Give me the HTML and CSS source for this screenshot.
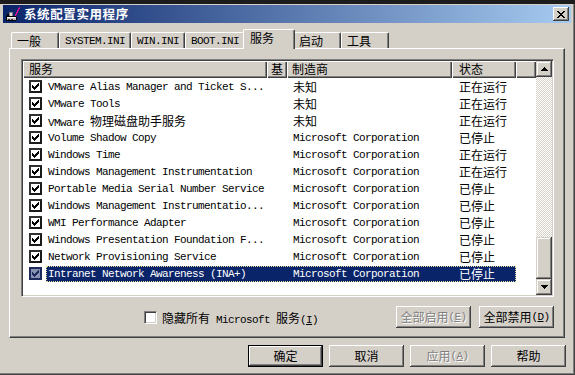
FILE: index.html
```html
<!DOCTYPE html>
<html lang="zh-CN">
<head>
<meta charset="utf-8">
<title>系统配置实用程序</title>
<link rel="stylesheet" href="styles.css">
</head>
<body>
<div class="topstrip"></div>
<div class="window">
  <div class="titlebar">
    <svg class="appicon" viewBox="0 0 16 16" shape-rendering="crispEdges">
      <path d="M1 10h10v1h1v3h-1v1H1z" fill="#000"/>
      <path d="M2 11h9v3H2z" fill="#c0c0c0"/>
      <path d="M2 11h9v1H2z" fill="#fff"/>
      <path d="M3 13h2v1H3zM6 13h2v1H6z" fill="#404040"/>
      <path d="M4 6h4v4H4z" fill="#808080"/>
      <path d="M5 7h2v3H5z" fill="#e0e0e0"/>
      <path d="M2 8h2v2H2z" fill="#000"/>
      <path d="M14 1h1v2h-1v2h-1v2h-1v2h-1v1h-1V8h1V6h1V4h1V2h1z" fill="#e0109a"/>
    </svg>
    <span class="title">系统配置实用程序</span>
    <div class="close">
      <svg width="8" height="7" viewBox="0 0 8 7" shape-rendering="crispEdges"><path d="M0 0h2v1H0zM6 0h2v1H6zM1 1h2v1H1zM5 1h2v1H5zM2 2h4v1H2zM3 3h2v1H3zM2 4h4v1H2zM1 5h2v1H1zM5 5h2v1H5zM0 6h2v1H0zM6 6h2v1H6z" fill="#000"/></svg>
    </div>
  </div>

  <div class="tabs">
    <div class="tab">一般</div>
    <div class="tab m">SYSTEM.INI</div>
    <div class="tab m">WIN.INI</div>
    <div class="tab m">BOOT.INI</div>
    <div class="tab active">服务</div>
    <div class="tab">启动</div>
    <div class="tab">工具</div>
  </div>

  <div class="panel">
    <div class="listbox">
      <div class="list">
        <div class="header">
          <div class="hcell h-svc">服务</div>
          <div class="hcell h-ji">基</div>
          <div class="hcell h-mfr">制造商</div>
          <div class="hcell h-st">状态</div>
          <div class="hcell"></div>
        </div>

        <div class="row"><div class="cbcell"><span class="cb"></span></div><div class="sel"><span class="name m">VMware Alias Manager and Ticket S...</span><span></span><span class="mfr">未知</span><span class="st">正在运行</span></div></div>
        <div class="row"><div class="cbcell"><span class="cb"></span></div><div class="sel"><span class="name m">VMware Tools</span><span></span><span class="mfr">未知</span><span class="st">正在运行</span></div></div>
        <div class="row"><div class="cbcell"><span class="cb"></span></div><div class="sel"><span class="name"><span class="m">VMware </span>物理磁盘助手服务</span><span></span><span class="mfr">未知</span><span class="st">正在运行</span></div></div>
        <div class="row"><div class="cbcell"><span class="cb"></span></div><div class="sel"><span class="name m">Volume Shadow Copy</span><span></span><span class="mfr m">Microsoft Corporation</span><span class="st">已停止</span></div></div>
        <div class="row"><div class="cbcell"><span class="cb"></span></div><div class="sel"><span class="name m">Windows Time</span><span></span><span class="mfr m">Microsoft Corporation</span><span class="st">正在运行</span></div></div>
        <div class="row"><div class="cbcell"><span class="cb"></span></div><div class="sel"><span class="name m">Windows Management Instrumentation</span><span></span><span class="mfr m">Microsoft Corporation</span><span class="st">正在运行</span></div></div>
        <div class="row"><div class="cbcell"><span class="cb"></span></div><div class="sel"><span class="name m">Portable Media Serial Number Service</span><span></span><span class="mfr m">Microsoft Corporation</span><span class="st">已停止</span></div></div>
        <div class="row"><div class="cbcell"><span class="cb"></span></div><div class="sel"><span class="name m">Windows Management Instrumentatio...</span><span></span><span class="mfr m">Microsoft Corporation</span><span class="st">已停止</span></div></div>
        <div class="row"><div class="cbcell"><span class="cb"></span></div><div class="sel"><span class="name m">WMI Performance Adapter</span><span></span><span class="mfr m">Microsoft Corporation</span><span class="st">已停止</span></div></div>
        <div class="row"><div class="cbcell"><span class="cb"></span></div><div class="sel"><span class="name m">Windows Presentation Foundation F...</span><span></span><span class="mfr m">Microsoft Corporation</span><span class="st">已停止</span></div></div>
        <div class="row"><div class="cbcell"><span class="cb"></span></div><div class="sel"><span class="name m">Network Provisioning Service</span><span></span><span class="mfr m">Microsoft Corporation</span><span class="st">已停止</span></div></div>
        <div class="row"><div class="cbcell"><span class="cb cb-sel"></span></div><div class="sel selected"><span class="name m">Intranet Network Awareness (INA+)</span><span></span><span class="mfr m">Microsoft Corporation</span><span class="st">已停止</span></div></div>
      </div>
      <div class="scrollbar">
        <div class="sbtn">
          <svg width="7" height="4" viewBox="0 0 7 4" shape-rendering="crispEdges"><path d="M3 0h1v1H3zM2 1h3v1H2zM1 2h5v1H1zM0 3h7v1H0z" fill="#000"/></svg>
        </div>
        <div class="track"></div>
        <div class="thumb"></div>
        <div class="sbtn">
          <svg width="7" height="4" viewBox="0 0 7 4" shape-rendering="crispEdges"><path d="M0 0h7v1H0zM1 1h5v1H1zM2 2h3v1H2zM3 3h1v1H3z" fill="#000"/></svg>
        </div>
      </div>
    </div>

    <div class="actions">
      <div class="hide"><span class="cb2"></span><span class="hide-label">隐藏所有<span class="m"> Microsoft </span>服务<span class="m">(<u>I</u>)</span></span></div>
      <div class="btn disabled first">全部启用<span class="m">(<u>E</u>)</span></div>
      <div class="btn">全部禁用<span class="m">(<u>D</u>)</span></div>
    </div>
  </div>

  <div class="footer">
    <div class="btn default">确定</div>
    <div class="btn">取消</div>
    <div class="btn disabled">应用<span class="m">(<u>A</u>)</span></div>
    <div class="btn">帮助</div>
  </div>
</div>
</body>
</html>
```

FILE: styles.css
```css
* { box-sizing: border-box; }
html, body { margin: 0; padding: 0; }
body {
  width: 575px;
  height: 375px;
  overflow: hidden;
  background: #d4d0c8;
  font-family: "Noto Sans CJK SC", "Noto Sans", sans-serif;
  font-size: 12px;
  color: #000;
}
.m {
  font-family: "Liberation Mono", "Noto Sans CJK SC", monospace;
  font-size: 11px;
  letter-spacing: -0.6px;
}
.topstrip { height: 4px; background: #1c1c1c; }

.window {
  height: 371px;
  padding: 1px 4px 0 3px;
  background: #d4d0c8;
  box-shadow: inset -1px -1px #404040, inset -2px -2px #808080;
  display: flex;
  flex-direction: column;
}

/* title bar */
.titlebar {
  height: 18px;
  flex: none;
  display: flex;
  align-items: center;
  padding-left: 2px;
  background: linear-gradient(to right, #0a246a, #a6caf0);
}
.appicon { width: 16px; height: 16px; flex: none; }
.title {
  margin-left: 3px;
  color: #fff;
  font-weight: bold;
  font-size: 12.5px;
  letter-spacing: 0.6px;
  line-height: 18px;
}
.close {
  margin-left: auto;
  margin-right: 2px;
  width: 16px;
  height: 14px;
  background: #d4d0c8;
  box-shadow: inset -1px -1px #404040, inset 1px 1px #fff, inset -2px -2px #808080;
  display: flex;
  align-items: center;
  justify-content: center;
}

/* tabs */
.tabs {
  display: flex;
  align-items: flex-end;
  height: 19px;
  margin-top: 6px;
  padding-left: 8px;
  flex: none;
}
.tab {
  height: 16px;
  min-width: 48px;
  padding: 0 5px;
  line-height: 16px;
  background: #d4d0c8;
  border-top: 1px solid #fff;
  border-left: 1px solid #fff;
  border-right: 1px solid #404040;
  box-shadow: inset -1px 0 #808080;
  border-radius: 2px 2px 0 0;
  white-space: nowrap;
}
.tab.m { line-height: 17px; }
.tab.active {
  height: 20px;
  min-width: 52px;
  margin: 0 -2px -1px;
  padding: 0 6px;
  line-height: 16px;
  position: relative;
  z-index: 1;
}

/* panel */
.panel {
  width: 556px;
  height: 290px;
  margin-left: 6px;
  flex: none;
  background: #d4d0c8;
  border-top: 1px solid #fff;
  border-left: 1px solid #fff;
  border-right: 1px solid #404040;
  border-bottom: 1px solid #404040;
  box-shadow: inset -1px -1px #808080;
  padding: 10px 0 0 11px;
}

.listbox {
  width: 533px;
  height: 238px;
  display: flex;
  border: 1px solid;
  border-color: #808080 #fff #fff #808080;
  box-shadow: inset 1px 1px #404040, inset -1px -1px #d4d0c8;
  padding: 1px;
}
.list {
  width: 513px;
  height: 100%;
  background: #fff;
}
.header {
  display: grid;
  grid-template-columns: 244px 20px 165px 64px 20px;
  height: 17px;
}
.hcell {
  background: #d4d0c8;
  box-shadow: inset 1px 1px #fff, inset -1px -1px #404040, inset -2px -2px #808080;
  padding-left: 6px;
  line-height: 16px;
  white-space: nowrap;
  overflow: hidden;
}
.h-ji { padding-left: 4px; }
.h-mfr { padding-left: 5px; }
.h-st { padding-left: 7px; }

.row {
  display: flex;
  align-items: center;
  height: 17px;
}
.cbcell {
  width: 23px;
  flex: none;
  padding-left: 6px;
  display: flex;
  align-items: center;
}
.cb {
  width: 13px;
  height: 13px;
  flex: none;
  border: 2px solid #1a1a1a;
  border-top-color: #303030;
  border-left-color: #303030;
  background: #fff url("data:image/svg+xml,%3Csvg xmlns='http://www.w3.org/2000/svg' width='9' height='9' viewBox='0 0 9 9' shape-rendering='crispEdges'%3E%3Cpath d='M7 1h1v1H7zM6 2h2v1H6zM1 3h1v1H1zM5 3h3v1H5zM1 4h2v1H1zM4 4h3v1H4zM1 5h5v1H1zM2 6h3v1H2zM3 7h1v1H3z' fill='%23000'/%3E%3C/svg%3E") no-repeat 0 0;
}
.cb-sel {
  border-color: #1c2a5c;
  background: #8a92b4 url("data:image/svg+xml,%3Csvg xmlns='http://www.w3.org/2000/svg' width='9' height='9' viewBox='0 0 9 9' shape-rendering='crispEdges'%3E%3Cpath d='M7 1h1v1H7zM6 2h2v1H6zM1 3h1v1H1zM5 3h3v1H5zM1 4h2v1H1zM4 4h3v1H4zM1 5h5v1H1zM2 6h3v1H2zM3 7h1v1H3z' fill='%231c2a5c'/%3E%3C/svg%3E") no-repeat 0 0;
}
.sel {
  width: 470px;
  height: 16px;
  display: grid;
  grid-template-columns: 221px 20px 165px 64px;
  line-height: 16px;
  white-space: nowrap;
}
.sel > span { overflow: hidden; }
.name { padding-left: 2px; }
.mfr { padding-left: 6px; }
.st { padding-left: 7px; }
.sel.selected {
  background: #0a246a;
  color: #fff;
  outline: 1px dotted #e8dc9a;
  outline-offset: -1px;
}

/* scrollbar */
.scrollbar {
  width: 16px;
  height: 100%;
  display: flex;
  flex-direction: column;
}
.sbtn, .thumb {
  height: 16px;
  flex: none;
  background: #d4d0c8;
  box-shadow: inset -1px -1px #404040, inset 1px 1px #d4d0c8, inset -2px -2px #808080, inset 2px 2px #fff;
  display: flex;
  align-items: center;
  justify-content: center;
}
.thumb { height: 42px; }
.track {
  flex: 1;
  background: repeating-conic-gradient(#fff 0 25%, #d4d0c8 0 50%) 0 0 / 2px 2px;
}

/* actions under list */
.actions {
  width: 533px;
  height: 22px;
  margin-top: 9px;
  display: flex;
  align-items: center;
}
.hide {
  display: flex;
  align-items: center;
  margin-left: 123px;
}
.cb2 {
  width: 13px;
  height: 13px;
  flex: none;
  background: #fff;
  border: 1px solid;
  border-color: #808080 #fff #fff #808080;
  box-shadow: inset 1px 1px #404040, inset -1px -1px #d4d0c8;
}
.hide-label { margin-left: 5px; white-space: pre; }
.actions .btn { margin-left: 8px; }
.actions .btn.first { margin-left: auto; }

/* buttons */
.btn {
  width: 75px;
  height: 22px;
  flex: none;
  background: #d4d0c8;
  box-shadow: inset -1px -1px #404040, inset 1px 1px #fff, inset -2px -2px #808080;
  display: flex;
  align-items: center;
  justify-content: center;
  white-space: nowrap;
  line-height: 16px;
}
.btn.default {
  border: 1px solid #000;
}
.btn.disabled {
  color: #808080;
  text-shadow: 1px 1px #fff;
}

.footer {
  display: flex;
  justify-content: flex-end;
  gap: 6px;
  margin-top: 7px;
  padding-right: 5px;
}
```
